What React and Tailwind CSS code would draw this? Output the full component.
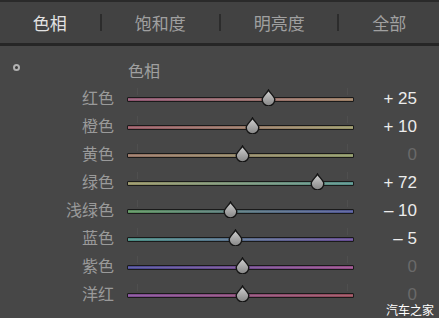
import React from 'react';

const cjk = { fontFamily: '"Noto Sans CJK SC", "Noto Sans", sans-serif' };
const num = { fontFamily: '"Liberation Sans", "Noto Sans", sans-serif' };

// thumb offset (px from track start) measured from the reference
const rows = [
  { label: '红色', value: '+ 25', on: true, pos: 141, from: '#8e5470', to: '#9a7e64' },
  { label: '橙色', value: '+ 10', on: true, pos: 125, from: '#945662', to: '#969466' },
  { label: '黄色', value: '0', on: false, pos: 115, from: '#947262', to: '#8a9464' },
  { label: '绿色', value: '+ 72', on: true, pos: 190, from: '#949062', to: '#548e88' },
  { label: '浅绿色', value: '– 10', on: true, pos: 103, from: '#588e5a', to: '#4e5494' },
  { label: '蓝色', value: '– 5', on: true, pos: 108, from: '#4a8e84', to: '#644a92' },
  { label: '紫色', value: '0', on: false, pos: 115, from: '#4a4a94', to: '#944a86' },
  { label: '洋红', value: '0', on: false, pos: 115, from: '#7e4a94', to: '#944a58' },
];

function Thumb() {
  return (
    <svg width="15" height="17" viewBox="0 0 15 17">
      <defs>
        <linearGradient id="tg" x1="0" y1="0" x2="0" y2="1">
          <stop offset="0" stopColor="#d2d2d2" />
          <stop offset="1" stopColor="#858585" />
        </linearGradient>
      </defs>
      <path
        d="M7.5 1 C8.8 4 13.8 7.5 13.8 10.6 A6.3 6.3 0 0 1 1.2 10.6 C1.2 7.5 6.2 4 7.5 1 Z"
        fill="url(#tg)"
        stroke="#141414"
        strokeWidth="1.4"
      />
    </svg>
  );
}

function Slider({ row }) {
  return (
    <div className="relative w-[227px] h-[5px]">
      <div className="absolute left-[10px] -top-[9px] w-px h-[7px] bg-[#4f4f4f]" />
      <div className="absolute right-[6px] -top-[9px] w-px h-[7px] bg-[#4f4f4f]" />
      <div
        className="h-[5px] rounded-[1px] border border-[#1a1a1a]"
        style={{ background: `linear-gradient(to right, ${row.from}, ${row.to})` }}
      >
        <div className="h-px mt-px bg-white/15" />
      </div>
      <div className="absolute -top-[8px]" style={{ left: row.pos - 7 }}>
        <Thumb />
      </div>
    </div>
  );
}

export default function App() {
  return (
    <div className="w-[439px] h-[318px] bg-[#474747] overflow-hidden relative" style={cjk}>
      {/* tabs */}
      <div className="h-[46px] bg-[#424242] border-t-2 border-[#2a2a2a] border-b-[3px] border-b-[#262626] flex items-center text-[17px]">
        <div className="w-[100px] text-center text-[#e2e2e2]">色相</div>
        <div className="w-[2px] h-[17px] bg-[#2c2c2c]" />
        <div className="w-[118px] text-center text-[#a0a0a0]">饱和度</div>
        <div className="w-[2px] h-[17px] bg-[#2c2c2c]" />
        <div className="w-[117px] text-center text-[#a0a0a0]">明亮度</div>
        <div className="w-[2px] h-[17px] bg-[#2c2c2c]" />
        <div className="w-[100px] text-center text-[#a0a0a0]">全部</div>
      </div>

      {/* panel header */}
      <div className="h-[38px] flex items-center pt-[10px]">
        <div className="w-[128px] pl-[13px] flex items-center">
          <div className="w-[7px] h-[7px] rounded-full border-2 border-[#b0b0b0] bg-[#3a3a3a] -mt-[6px]" />
        </div>
        <div className="text-[16px] text-[#a0a0a0] leading-none">色相</div>
      </div>

      {/* rows */}
      <div className="flex flex-col">
        {rows.map((r) => (
          <div key={r.label} className="h-[28px] flex items-center">
            <div className="w-[114px] text-right text-[16px] text-[#9a9a9a] leading-none pb-[2px]">{r.label}</div>
            <div className="ml-[13px] mt-[2px]">
              <Slider row={r} />
            </div>
            <div
              className={`w-[63px] text-right text-[17px] leading-none ${r.on ? 'text-[#ececec]' : 'text-[#6a6a6a]'}`}
              style={num}
            >
              {r.value}
            </div>
          </div>
        ))}
      </div>

      <div className="absolute right-[5px] bottom-[2px] text-[12px] text-white leading-none">汽车之家</div>
    </div>
  );
}
